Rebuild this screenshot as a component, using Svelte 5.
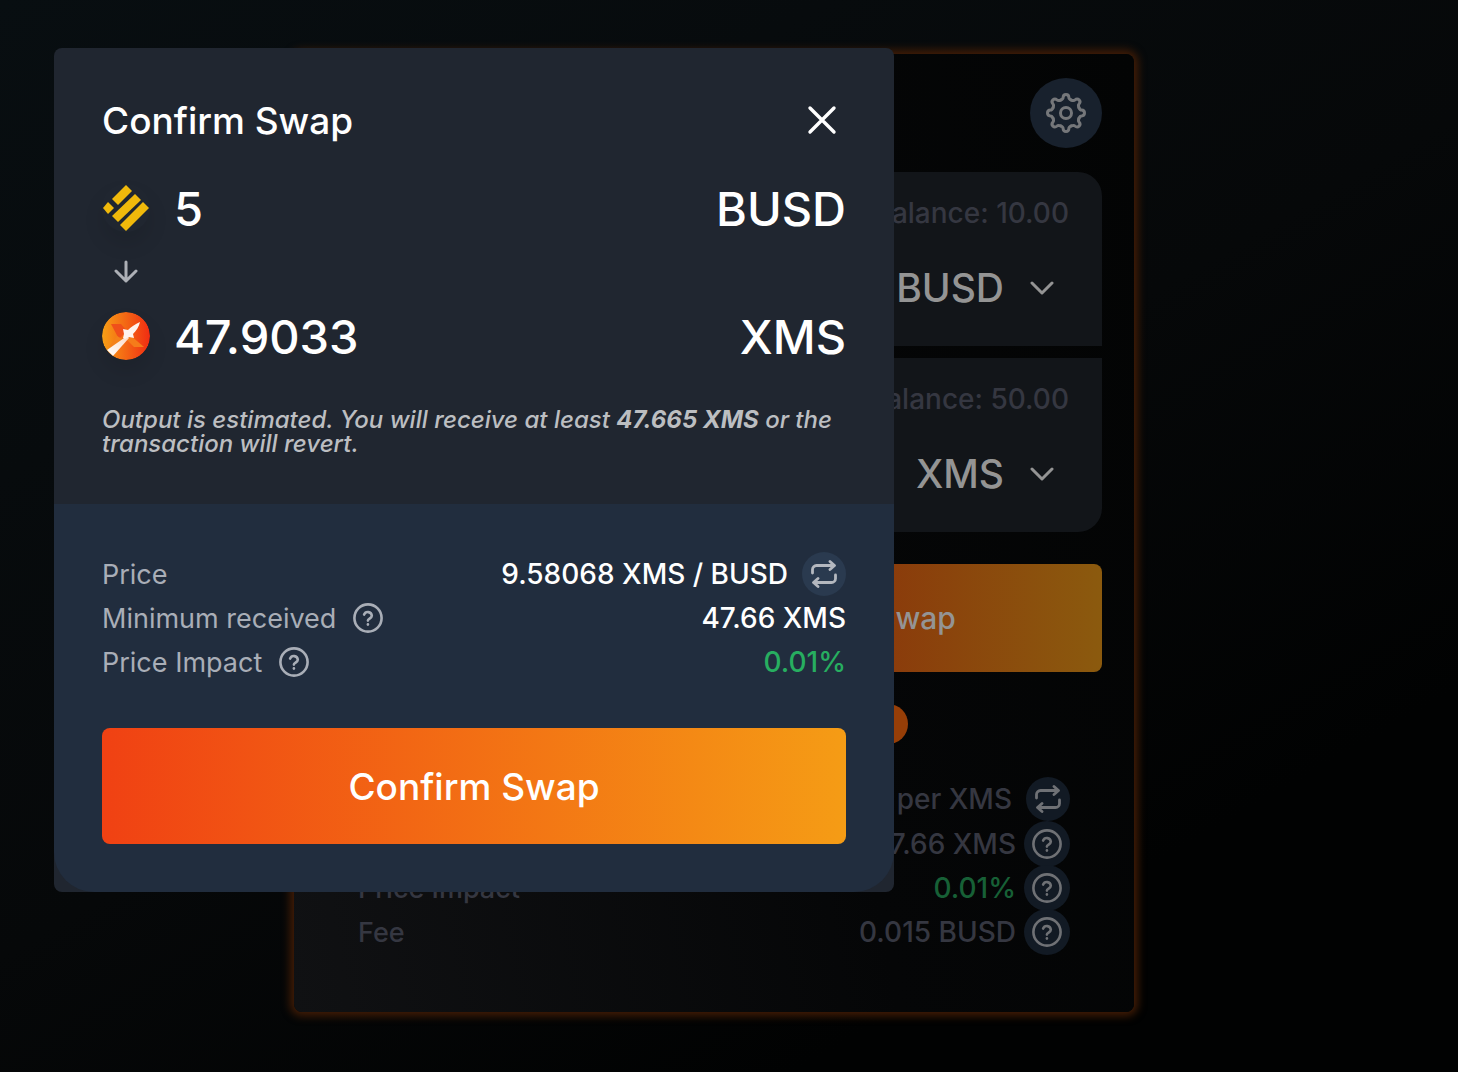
<script>
    let inverted = $state(false);
    let open = $state(true);

    const details = [
        { label: "Minimum received", value: "47.66 XMS" },
        { label: "Price Impact", value: "0.01%", good: true },
        { label: "Fee", value: "0.015 BUSD" }
    ];

    const panels = [
        { balance: "10.00", token: "BUSD" },
        { balance: "50.00", token: "XMS" }
    ];

    const teeth = [0, 45, 90, 135, 180, 225, 270, 315];
</script>

{#snippet help()}
    <svg class="help" viewBox="0 0 32 32" aria-hidden="true">
        <circle cx="16" cy="16" r="13.6" />
        <path d="M12.1 12.6a4 4 0 0 1 7.7 1.1c0 2.6-3.9 3-3.9 4.9" />
        <path d="M15.9 22.3v.3" />
    </svg>
{/snippet}

{#snippet repeat()}
    <svg class="repeat" viewBox="0 0 28 28" aria-hidden="true">
        <path d="M20 1.500l4.500 4L20 9.500M24 5.500H6.500a4 4 0 0 0-4 4V13" />
        <path d="M8 18.500l-4.500 4 4.500 4M4 22.500h17.500a4 4 0 0 0 4-4V15" />
    </svg>
{/snippet}

<main class="page">
    <section class="card">
        <header class="card-header">
            <button class="gear" aria-label="Settings">
                <svg viewBox="-20 -20 40 40" aria-hidden="true">
                    <circle r="5.500" />
                    {#each teeth as angle}
                        <path
                            transform="rotate({angle})"
                            d="M-5.360-12.930C-4.100-13.450-2.900-14.300-2.900-15.500C-2.700-19.500 2.700-19.500 2.900-15.500C2.900-14.300 4.100-13.450 5.360-12.930"
                        />
                    {/each}
                </svg>
            </button>
        </header>

        <div class="panels">
            {#each panels as panel}
                <div class="panel">
                    <span class="balance">Balance: {panel.balance}</span>
                    <button class="token">
                        {panel.token}
                        <svg viewBox="0 0 24 24" aria-hidden="true"><path d="M2 7l10 10L22 7" /></svg>
                    </button>
                </div>
            {/each}
        </div>

        <div class="actions">
            <button class="action">Approve</button>
            <button class="action">Swap</button>
        </div>
        <div class="steps"><span></span><span></span></div>

        <dl class="details">
            <div class="row">
                <dt>Price</dt>
                <dd>BUSD per XMS <button class="round" aria-label="Invert price">{@render repeat()}</button></dd>
            </div>
            {#each details as item}
                <div class="row">
                    <dt>{item.label}</dt>
                    <dd class:good={item.good}>
                        {item.value}
                        <button class="round wide" aria-label="About {item.label}">{@render help()}</button>
                    </dd>
                </div>
            {/each}
        </dl>
    </section>
</main>

{#if open}
    <div class="overlay">
        <div class="modal" role="dialog" aria-labelledby="modal-title">
            <div class="summary">
                <header class="modal-header">
                    <h2 id="modal-title">Confirm Swap</h2>
                    <button class="close" aria-label="Close" onclick={() => (open = false)}>
                        <svg viewBox="0 0 30 30" aria-hidden="true"><path d="M3 3l24 24M27 3L3 27" /></svg>
                    </button>
                </header>

                <div class="amount">
                    <svg class="coin" viewBox="0 0 48 48" aria-hidden="true">
                        <g fill="#f0b90b">
                            <path d="M24 1l6 6-14 14-6-6z" />
                            <path d="M33 10l6 6-23 22-6-6z" />
                            <path d="M41 18l6 6-23 23-6-6z" />
                            <path d="M6 18l6 6-6 6-5-6z" />
                        </g>
                    </svg>
                    <span>5</span>
                    <span class="symbol">BUSD</span>
                </div>
                <svg class="arrow" viewBox="0 0 24 24" aria-hidden="true"><path d="M12 2v19M2 11l10 10 10-10" /></svg>
                <div class="amount">
                    <svg class="coin" viewBox="0 0 48 48" aria-hidden="true">
                        <defs>
                            <linearGradient id="xms"><stop stop-color="#f7a016" /><stop offset="1" stop-color="#f02c12" /></linearGradient>
                            <linearGradient id="trail" x1="0" y1="1" x2="1" y2="0">
                                <stop stop-color="#fff" />
                                <stop offset="1" stop-color="#fbd9c4" />
                            </linearGradient>
                        </defs>
                        <circle cx="24" cy="24" r="24" fill="url(#xms)" />
                        <path d="M9 12h10l6 7-8 8z" fill="#f0501a" />
                        <path d="M15 24l7 4-8 7H7z" fill="#f4821a" />
                        <path d="M28 23l14 12H32l-8-8z" fill="#f57c1a" />
                        <path d="M5 38l20-14 2 2-16 18z" fill="url(#trail)" />
                        <path d="M38 10c-1 5-4 9-7 12l1 4-5-1-4 2-2-1 1-4-1-5 5 1c3-3 7-6 12-8z" fill="#fff3ee" />
                    </svg>
                    <span>47.9033</span>
                    <span class="symbol">XMS</span>
                </div>

                <p class="note">
                    Output is estimated. You will receive at least <b>47.665 XMS</b> or the transaction will revert.
                </p>
            </div>

            <div class="confirm">
                <dl>
                    <div class="row">
                        <dt>Price</dt>
                        <dd>
                            {inverted ? "0.104377 BUSD / XMS" : "9.58068 XMS / BUSD"}
                            <button class="round" aria-label="Invert price" onclick={() => (inverted = !inverted)}>{@render repeat()}</button>
                        </dd>
                    </div>
                    {#each details.slice(0, 2) as item}
                        <div class="row">
                            <dt>{item.label} {@render help()}</dt>
                            <dd class:good={item.good}>{item.value}</dd>
                        </div>
                    {/each}
                </dl>
                <button class="submit">Confirm Swap</button>
            </div>
        </div>
    </div>
{/if}

<style>
    :global(body) {
        background: #020303;
        color: #fff;
        font-family: Inter, "Liberation Sans", sans-serif;
        font-size: 28px;
        font-weight: 500;
    }

    * {
        box-sizing: border-box;
    }

    button {
        padding: 0;
        border: none;
        background: none;
        color: inherit;
        font: inherit;
        cursor: pointer;
    }

    svg {
        flex: none;
        fill: none;
        stroke: currentColor;
        stroke-width: 3;
        stroke-linecap: round;
        stroke-linejoin: round;
    }

    dl,
    dd,
    h2,
    p {
        margin: 0;
    }

    .page {
        min-height: 100vh;
        padding: 54px 30px 60px 0;
        background: linear-gradient(150deg, #080e11 0%, #060809 50%, #010202 80%);
    }

    .card {
        max-width: 840px;
        min-height: 958px;
        margin: 0 auto;
        padding: 24px 32px;
        border-radius: 8px;
        background: linear-gradient(80deg, #101113, #050607 60%, #030404);
        box-shadow: 0 0 8px 4px #431d06;
    }

    .card-header {
        display: flex;
        justify-content: flex-end;
    }

    .gear {
        display: flex;
        align-items: center;
        justify-content: center;
        width: 72px;
        height: 70px;
        border-radius: 50%;
        background: #18212d;
        color: #75777a;
    }

    .gear svg {
        width: 40px;
        height: 40px;
    }

    .panels {
        display: grid;
        gap: 12px;
        margin-top: 24px;
    }

    .panel {
        display: flex;
        flex-direction: column;
        align-items: flex-end;
        gap: 32px;
        height: 174px;
        padding: 24px 33px;
        background: #121519;
        color: #353741;
    }

    .panel:first-child {
        border-radius: 24px 24px 0 0;
    }

    .panel:last-child {
        border-radius: 0 0 24px 24px;
    }

    .balance {
        line-height: 34px;
    }

    .token {
        display: flex;
        align-items: center;
        gap: 26px;
        padding-right: 15px;
        color: #949494;
        font-size: 39px;
        line-height: 52px;
    }

    .token svg {
        width: 24px;
        height: 24px;
    }

    .actions {
        display: grid;
        grid-template-columns: 1fr 1fr;
        gap: 32px;
        margin-top: 32px;
    }

    .action {
        height: 108px;
        border-radius: 8px;
        background: linear-gradient(90deg, #8a2509, #8b5a0e);
        color: #949494;
        font-size: 30px;
    }

    .steps {
        display: flex;
        justify-content: space-between;
        width: 50%;
        margin: 32px auto 0;
    }

    .steps span {
        width: 40px;
        height: 40px;
        border-radius: 50%;
        background: #963e07;
    }

    .details {
        margin-top: 32px;
        padding: 0 32px;
        color: #353741;
    }

    .row,
    dt,
    dd {
        display: flex;
        align-items: center;
        height: 44px;
    }

    .row {
        justify-content: space-between;
    }

    dt {
        gap: 16px;
        font-size: 27px;
    }

    dd {
        gap: 14px;
    }

    .details dd {
        gap: 8px;
    }

    .details .row:first-child {
        height: 46px;
    }

    .details .row:first-child dd {
        gap: 14px;
    }

    .details .good {
        color: #176036;
    }

    .round {
        display: flex;
        align-items: center;
        justify-content: center;
        width: 44px;
        height: 44px;
        border-radius: 50%;
        background: #2a3a4f;
        color: #b4b8bf;
    }

    .details .round {
        background: #121a24;
        color: #6f7175;
    }

    .details .wide {
        width: 46px;
        height: 46px;
    }

    .help {
        width: 32px;
        height: 32px;
        stroke-width: 2.6;
    }

    .repeat {
        width: 28px;
        height: 28px;
        stroke-width: 2.8;
    }

    .overlay {
        position: absolute;
        top: 0;
        left: 0;
        width: 100%;
        padding: 48px 54px;
    }

    .modal {
        max-width: 840px;
        border-radius: 8px;
        overflow: hidden;
        background: #202630;
    }

    .summary {
        padding: 48px;
    }

    .modal-header {
        display: flex;
        align-items: center;
        justify-content: space-between;
        height: 48px;
        padding-right: 9px;
    }

    h2 {
        font-size: 37px;
        font-weight: 500;
    }

    .close {
        display: flex;
        width: 30px;
        height: 30px;
    }

    .close svg {
        stroke-width: 3.4;
    }

    .amount {
        display: flex;
        align-items: center;
        gap: 24px;
        height: 48px;
        font-size: 47px;
    }

    .modal-header + .amount {
        margin-top: 40px;
    }

    .symbol {
        margin-left: auto;
    }

    .coin {
        width: 48px;
        height: 48px;
        border-radius: 50%;
        stroke: none;
        box-shadow: 0 12px 20px #0000001a;
    }

    .arrow {
        display: block;
        width: 24px;
        height: 24px;
        margin: 28px 12px;
        color: #adb0b6;
    }

    .note {
        margin-top: 48px;
        color: #bcbec1;
        font-size: 24px;
        font-style: italic;
        line-height: 24px;
    }

    .note b {
        font-weight: 700;
    }

    .confirm {
        padding: 48px;
        border-radius: 0 0 40px 40px;
        background: #212d3e;
    }

    .confirm dt {
        color: #a9aeb7;
        font-weight: 400;
    }

    .confirm .good {
        color: #27ae60;
    }

    .submit {
        width: 100%;
        height: 116px;
        margin-top: 44px;
        border-radius: 8px;
        background: linear-gradient(90deg, #f04113, #f59c15);
        font-size: 37px;
    }
</style>
